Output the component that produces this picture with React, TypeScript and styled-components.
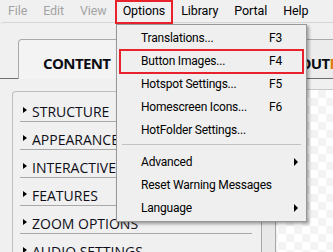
import React from 'react'
import styled, { createGlobalStyle } from 'styled-components'

const GlobalStyle = createGlobalStyle`
  html, body {
    margin: 0;
    padding: 0;
    background: #f0f0f0;
  }
  body {
    font-family: 'Open Sans', 'Noto Sans', sans-serif;
    color: #000;
  }
`

const menuBarItems = [
  { label: 'File', disabled: true },
  { label: 'Edit', disabled: true },
  { label: 'View', disabled: true },
  { label: 'Options', open: true },
  { label: 'Library' },
  { label: 'Portal' },
  { label: 'Help' },
]

const sections = [
  'STRUCTURE',
  'APPEARANCE',
  'INTERACTIVE FEATURES',
  'FEATURES',
  'ZOOM OPTIONS',
  'AUDIO SETTINGS',
]

type MenuEntry =
  | { kind: 'item'; label: string; shortcut?: string; submenu?: boolean; marked?: boolean }
  | { kind: 'sep' }

const optionsMenu: MenuEntry[] = [
  { kind: 'item', label: 'Translations...', shortcut: 'F3' },
  { kind: 'item', label: 'Button Images...', shortcut: 'F4', marked: true },
  { kind: 'item', label: 'Hotspot Settings...', shortcut: 'F5' },
  { kind: 'item', label: 'Homescreen Icons...', shortcut: 'F6' },
  { kind: 'item', label: 'HotFolder Settings...' },
  { kind: 'sep' },
  { kind: 'item', label: 'Advanced', submenu: true },
  { kind: 'item', label: 'Reset Warning Messages' },
  { kind: 'item', label: 'Language', submenu: true },
]

const App = () => {
  return (
    <Page>
      <GlobalStyle />
      <MenuBar>
        {menuBarItems.map((m) => (
          <MenuBarItem key={m.label} $disabled={m.disabled} $open={m.open}>
            {m.label}
          </MenuBarItem>
        ))}
      </MenuBar>

      <Workspace>
        <TabStrip>
          <Tab $active $width={122}>
            CONTENT
          </Tab>
          <Tab $offset={108}>
            LAYOUT<Accent>PUBLISH</Accent>
          </Tab>
        </TabStrip>

        <Main>
          <SidePanel>
            <SectionList>
              {sections.map((s) => (
                <SectionRow key={s}>
                  <Caret />
                  <SectionLabel>{s}</SectionLabel>
                </SectionRow>
              ))}
            </SectionList>
            <ScrollTrack />
          </SidePanel>
          <Canvas />
        </Main>
      </Workspace>

      <DropMenu>
        {optionsMenu.map((e, i) =>
          e.kind === 'sep' ? (
            <MenuSeparator key={i} />
          ) : (
            <MenuItem key={i} $marked={e.marked}>
              <span>{e.label}</span>
              <Shortcut>{e.shortcut}</Shortcut>
              {e.submenu && <SubArrow />}
            </MenuItem>
          )
        )}
      </DropMenu>
    </Page>
  )
}

export default App

const Page = styled.div`
  position: relative;
  width: 333px;
  height: 252px;
  overflow: hidden;
  background: #f0f0f0;
`

const MenuBar = styled.div`
  display: flex;
  align-items: center;
  height: 22px;
  background: #f0f0f0;
`

const MenuBarItem = styled.div<{ $disabled?: boolean; $open?: boolean }>`
  position: relative;
  height: 22px;
  line-height: 22px;
  padding: 0 8px;
  font-family: Roboto, 'Open Sans', sans-serif;
  font-size: 12.5px;
  letter-spacing: -0.1px;
  color: ${(p) => (p.$disabled ? '#a3a3a3' : '#000')};
  ${(p) =>
    p.$open &&
    `
    &::after {
      content: '';
      position: absolute;
      left: 0;
      right: 0;
      top: 0;
      bottom: -2px;
      border: 2px solid #e8222a;
      z-index: 5;
    }
  `}
`

const Workspace = styled.div`
  border-top: 1px solid #d6d6d6;
  border-top-left-radius: 4px;
`

const TabStrip = styled.div`
  display: flex;
  align-items: flex-end;
  padding: 16px 0 0 18px;
  border-bottom: 1px solid #6e6e6e;
  white-space: nowrap;
`

const Tab = styled.div<{ $active?: boolean; $width?: number; $offset?: number }>`
  flex-shrink: 0;
  box-sizing: border-box;
  height: ${(p) => (p.$active ? 40 : 39)}px;
  margin-bottom: ${(p) => (p.$active ? -1 : 0)}px;
  margin-left: ${(p) => p.$offset ?? 0}px;
  width: ${(p) => (p.$width ? `${p.$width}px` : 'auto')};
  padding: 13px 24px 0 24px;
  border: 1px solid #a9a9a9;
  border-bottom: none;
  border-radius: 4px 4px 0 0;
  background: ${(p) => (p.$active ? '#f3f3f3' : '#ececec')};
  font-size: 15px;
  font-weight: 700;
  letter-spacing: -0.6px;
  line-height: 20px;
  color: #0c0c14;
`

const Accent = styled.span`
  color: #e07a10;
`

const Main = styled.div`
  display: flex;
  align-items: flex-start;
  gap: 1px;
  padding-left: 12px;
`

const SidePanel = styled.div`
  display: flex;
  flex-shrink: 0;
  width: 264px;
  height: 200px;
  margin-top: 12px;
  box-sizing: border-box;
  border: 1px solid #bdbdbd;
  border-right-color: #a8a8a8;
  border-radius: 4px;
  background: #f0f0f0;
`

const SectionList = styled.div`
  flex: 1;
  padding: 2px 9px 0 7px;
  overflow: hidden;
`

const SectionRow = styled.div`
  display: flex;
  align-items: flex-end;
  height: 27px;
  border-bottom: 1px solid #a8a8a8;
  white-space: nowrap;
`

const Caret = styled.span`
  width: 0;
  height: 0;
  margin: 0 5px 8px 3px;
  border-left: 4px solid #000;
  border-top: 3.5px solid transparent;
  border-bottom: 3.5px solid transparent;
`

const SectionLabel = styled.span`
  font-size: 14px;
  line-height: 18px;
  color: #0e0e18;
`

const ScrollTrack = styled.div`
  width: 13px;
  border-left: 1px solid #a8a8a8;
  background: #e8e8e8;
`

const Canvas = styled.div`
  flex: 1;
  height: 200px;
  margin-top: 10px;
  border-top: 1px solid #c9c9c9;
  background: repeating-conic-gradient(#f3f3f3 0 25%, #ffffff 0 50%) 1px 0 / 16px 16px;
`

const DropMenu = styled.div`
  position: absolute;
  left: 116px;
  top: 24px;
  width: 191px;
  box-sizing: border-box;
  padding: 2px 0 1px;
  border: 1px solid #979797;
  background: #efefef;
  box-shadow: 2px 2px 3px rgba(0, 0, 0, 0.35);
  z-index: 4;
`

const MenuItem = styled.div<{ $marked?: boolean }>`
  position: relative;
  display: grid;
  grid-template-columns: 128px 1fr;
  height: 23px;
  line-height: 22px;
  padding-left: 24px;
  font-family: Roboto, 'Open Sans', sans-serif;
  font-size: 12px;
  letter-spacing: -0.2px;
  color: #000;
  white-space: nowrap;
  ${(p) =>
    p.$marked &&
    `
    &::after {
      content: '';
      position: absolute;
      left: 2px;
      right: 2px;
      top: -1px;
      bottom: -1px;
      border: 2px solid #e8222a;
    }
  `}
`

const Shortcut = styled.span``

const SubArrow = styled.span`
  position: absolute;
  right: 8px;
  top: 7px;
  width: 0;
  height: 0;
  border-left: 4px solid #000;
  border-top: 4px solid transparent;
  border-bottom: 4px solid transparent;
`

const MenuSeparator = styled.div`
  height: 9px;
  margin: 0 5px 0 5px;
  box-sizing: border-box;
  padding-top: 2px;
  &::before {
    content: '';
    display: block;
    height: 1px;
    background: #c2c2c2;
  }
`
